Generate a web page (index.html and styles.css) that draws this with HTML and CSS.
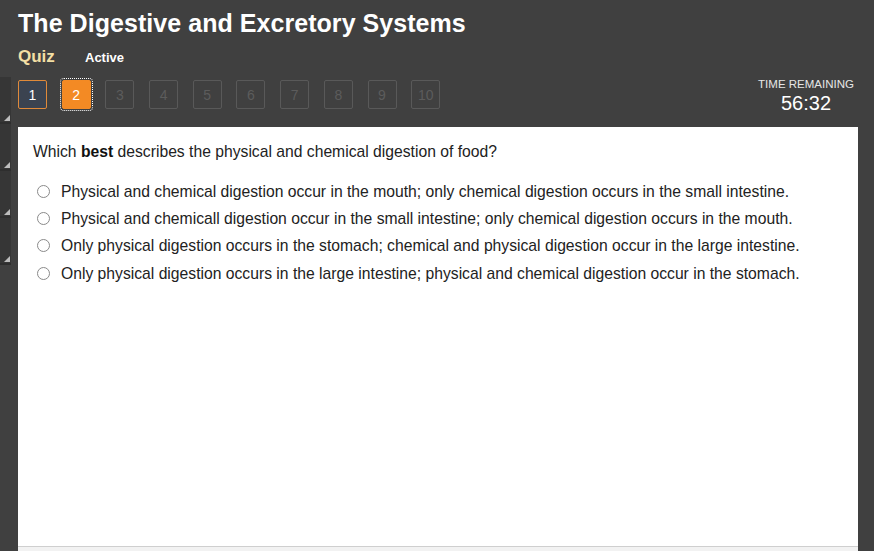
FILE: index.html
```html
<!DOCTYPE html>
<html>
<head>
<meta charset="utf-8">
<link rel="stylesheet" href="styles.css">
</head>
<body>
<div class="page">
  <div class="side">
    <div class="tab"><span class="tri"></span></div>
    <div class="tab"><span class="tri"></span></div>
    <div class="tab"><span class="tri"></span></div>
    <div class="tab"><span class="tri"></span></div>
  </div>
  <div class="main">
    <h1 class="title">The Digestive and Excretory Systems</h1>
    <div class="sub">
      <span class="quiz">Quiz</span>
      <span class="status">Active</span>
    </div>
    <div class="navrow">
      <div class="nums">
        <div class="num done">1</div>
        <div class="num current">2</div>
        <div class="num">3</div>
        <div class="num">4</div>
        <div class="num">5</div>
        <div class="num">6</div>
        <div class="num">7</div>
        <div class="num">8</div>
        <div class="num">9</div>
        <div class="num">10</div>
      </div>
      <div class="timer">
        <div class="tlabel">TIME REMAINING</div>
        <div class="tval">56:32</div>
      </div>
    </div>
    <div class="panel">
      <p class="question">Which <b>best</b> describes the physical and chemical digestion of food?</p>
      <ul class="options">
        <li><span class="radio"></span>Physical and chemical digestion occur in the mouth; only chemical digestion occurs in the small intestine.</li>
        <li><span class="radio"></span>Physical and chemicall digestion occur in the small intestine; only chemical digestion occurs in the mouth.</li>
        <li><span class="radio"></span>Only physical digestion occurs in the stomach; chemical and physical digestion occur in the large intestine.</li>
        <li><span class="radio"></span>Only physical digestion occurs in the large intestine; physical and chemical digestion occur in the stomach.</li>
      </ul>
    </div>
    <div class="footer"></div>
  </div>
</div>
</body>
</html>
```
FILE: styles.css
```css
html, body {
  margin: 0;
  padding: 0;
  background: #404040;
  font-family: "Liberation Sans", Arial, sans-serif;
  overflow: hidden;
}
.page {
  width: 874px;
  height: 551px;
  position: relative;
}
.side {
  position: absolute;
  left: 0;
  top: 77px;
  width: 11px;
  display: flex;
  flex-direction: column;
}
.tab {
  height: 45px;
  background: #363636;
  border-bottom: 2px solid #2e2e2e;
  position: relative;
}
.tri {
  position: absolute;
  right: 1px;
  bottom: 1px;
  width: 0;
  height: 0;
  border-left: 6px solid transparent;
  border-bottom: 6px solid #bdbdbd;
}
.main {
  margin-left: 18px;
  margin-right: 16px;
  display: flex;
  flex-direction: column;
  height: 551px;
}
.title {
  margin: 8px 0 0 0;
  font-size: 25px;
  font-weight: bold;
  color: #ffffff;
  line-height: 30px;
  letter-spacing: 0.05px;
}
.sub {
  display: flex;
  align-items: baseline;
  margin-top: 9px;
  height: 22px;
}
.quiz {
  color: #f3dfa4;
  font-size: 17px;
  font-weight: bold;
  width: 67px;
}
.status {
  color: #ffffff;
  font-size: 13px;
  font-weight: bold;
}
.navrow {
  display: flex;
  justify-content: space-between;
  margin-top: 11px;
  height: 33px;
}
.nums {
  display: flex;
  gap: 14.7px;
}
.num {
  width: 27px;
  height: 27px;
  border: 1px solid #595959;
  border-radius: 2px;
  color: #5c5c5c;
  font-size: 14px;
  display: flex;
  align-items: center;
  justify-content: center;
  box-sizing: content-box;
}
.num.done {
  background: #3b4350;
  border-color: #e08a3a;
  color: #ffffff;
}
.num.current {
  background: #f38a24;
  border-color: #f38a24;
  color: #ffffff;
  outline: 1px dotted #ffffff;
  outline-offset: 1px;
}
.timer {
  text-align: center;
  margin-top: -3px;
  margin-right: 2px;
  width: 100px;
}
.tlabel {
  color: #e6e6e6;
  font-size: 11.5px;
  line-height: 14px;
}
.tval {
  color: #ffffff;
  font-size: 20px;
  line-height: 24px;
}
.panel {
  background: #ffffff;
  margin-top: 14px;
  flex: 1;
  padding: 15px 15px 0 15px;
  margin-bottom: 0;
}
.question {
  margin: 0;
  font-size: 15.7px;
  color: #222222;
  line-height: 20px;
}
.question b {
  color: #111111;
}
.options {
  list-style: none;
  margin: 16px 0 0 0;
  padding: 0;
}
.options li {
  display: flex;
  align-items: center;
  font-size: 15.7px;
  color: #222222;
  height: 27px;
  line-height: 20px;
}
.options li:nth-child(4) { margin-top: 1px; }
.radio {
  width: 11px;
  height: 11px;
  border: 1px solid #8a8a8a;
  border-radius: 50%;
  margin: -1px 11px 0 4px;
  background: #fff;
  flex: none;
}
.footer {
  height: 4px;
  background: #f2f2f2;
  border-top: 1px solid #cfcfcf;
}
```
